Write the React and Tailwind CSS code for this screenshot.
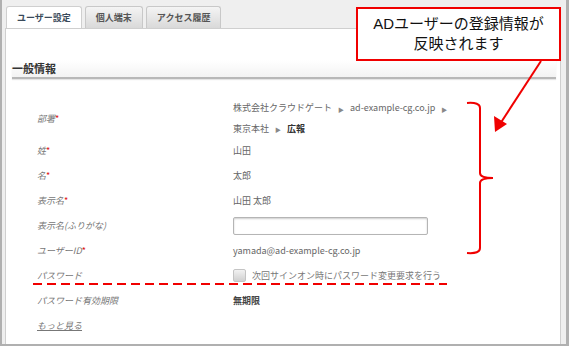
import React from "react";

const FONT = { fontFamily: '"Noto Sans CJK JP", "Noto Sans", sans-serif' };

const Req = () => <span className="not-italic text-[#e01010] text-[9px] align-top">*</span>;

const Arrow = () => <span className="mx-[6px] text-[6px] text-[#888] align-middle">▶</span>;

const Row = ({ label, required, children, tall }) => (
  <div className={`flex items-center ${tall ? "h-[39px]" : "h-[25px]"}`}>
    <div className="w-[196px] italic text-[9px] text-[#777]">
      {label}
      {required && <Req />}
    </div>
    <div className="flex-1 text-[9px] text-[#666]">{children}</div>
  </div>
);

const Tab = ({ active, children }) => (
  <div
    className={`h-[22px] px-[10px] flex items-center text-[9px] font-bold rounded-t-[3px] border border-b-0 ${
      active
        ? "bg-white border-[#cfcfcf] text-[#3a4a5a] h-[23px] -mb-px"
        : "bg-gradient-to-b from-[#f4f4f4] to-[#d9d9d9] border-[#c8c8c8] text-[#555]"
    }`}
  >
    {children}
  </div>
);

export default function App() {
  return (
    <div className="relative w-[571px] h-[348px] overflow-hidden bg-white" style={FONT}>
      <div className="w-[569px] h-[346px] border-l-2 border-r-[3px] border-b-2 border-[#b0b0b0] bg-[#efefef] pl-[3px] pr-[3px] pt-[6px] flex flex-col">
        {/* tabs */}
        <div className="flex items-end gap-[3px] pl-[1px]">
          <Tab active>ユーザー設定</Tab>
          <Tab>個人端末</Tab>
          <Tab>アクセス履歴</Tab>
        </div>

        {/* panel */}
        <div className="flex-1 bg-white border border-[#cfcfcf] border-b-0 mr-[2px] pt-[31px] pl-[6px] pr-[4px]">
          <div className="h-[19px] bg-gradient-to-b from-white to-[#f3f3f3] border-b-2 border-[#b8b8b8] text-[11px] font-bold text-[#333] leading-[17px] shadow-[0_1px_1px_rgba(0,0,0,0.1)]">
            一般情報
          </div>

          <div className="pl-[25px] pt-[20px]">
            <Row label="部署" required tall>
              <div className="leading-[19px]">
                株式会社クラウドゲート
                <Arrow />
                ad-example-cg.co.jp
                <Arrow />
              </div>
              <div className="leading-[19px]">
                東京本社
                <Arrow />
                <span className="font-bold text-[#333]">広報</span>
              </div>
            </Row>
            <Row label="姓" required>山田</Row>
            <Row label="名" required>太郎</Row>
            <Row label="表示名" required>山田 太郎</Row>
            <Row label="表示名(ふりがな)">
              <div className="w-[195px] h-[18px] border border-[#b5b5b5] rounded-[2px] shadow-[inset_0_1px_2px_rgba(0,0,0,0.2)]" />
            </Row>
            <Row label="ユーザーID" required>yamada@ad-example-cg.co.jp</Row>
            <Row label="パスワード">
              <div className="flex items-center gap-[6px]">
                <div className="w-[13px] h-[13px] rounded-[2px] border border-[#c4c4c4] bg-gradient-to-b from-[#f2f2f2] to-[#d0d0d0]" />
                <span className="text-[#777]">次回サインオン時にパスワード変更要求を行う</span>
              </div>
            </Row>
            <Row label="パスワード有効期限">
              <span className="font-bold text-[#444]">無期限</span>
            </Row>
            <Row label={<span className="underline">もっと見る</span>} />
          </div>
        </div>
      </div>

      {/* callout */}
      <div
        className="absolute left-[356px] top-[7px] w-[205px] h-[54px] bg-white border-2 border-[#f00000] flex flex-col items-center justify-center text-[15px] leading-[20px] text-[#111]"
        style={{ fontFamily: '"Liberation Sans", "Noto Sans CJK JP", sans-serif' }}
      >
        <div>ADユーザーの登録情報が</div>
        <div>反映されます</div>
      </div>

      {/* annotations */}
      <svg className="absolute left-0 top-0 pointer-events-none" width="571" height="348">
        <line x1="541" y1="61" x2="500" y2="124" stroke="#f00000" strokeWidth="2" />
        <polygon points="495,132 494,116 507,124" fill="#f00000" />
        <path
          d="M467 103 Q480 102 480 108 L480 173 Q480 178 493 178 Q480 178 480 183 L480 248 Q480 254 467 253"
          fill="none"
          stroke="#f00000"
          strokeWidth="2"
        />
        <line x1="33" y1="284" x2="447" y2="284" stroke="#f00000" strokeWidth="2" strokeDasharray="9 5" />
      </svg>
    </div>
  );
}
